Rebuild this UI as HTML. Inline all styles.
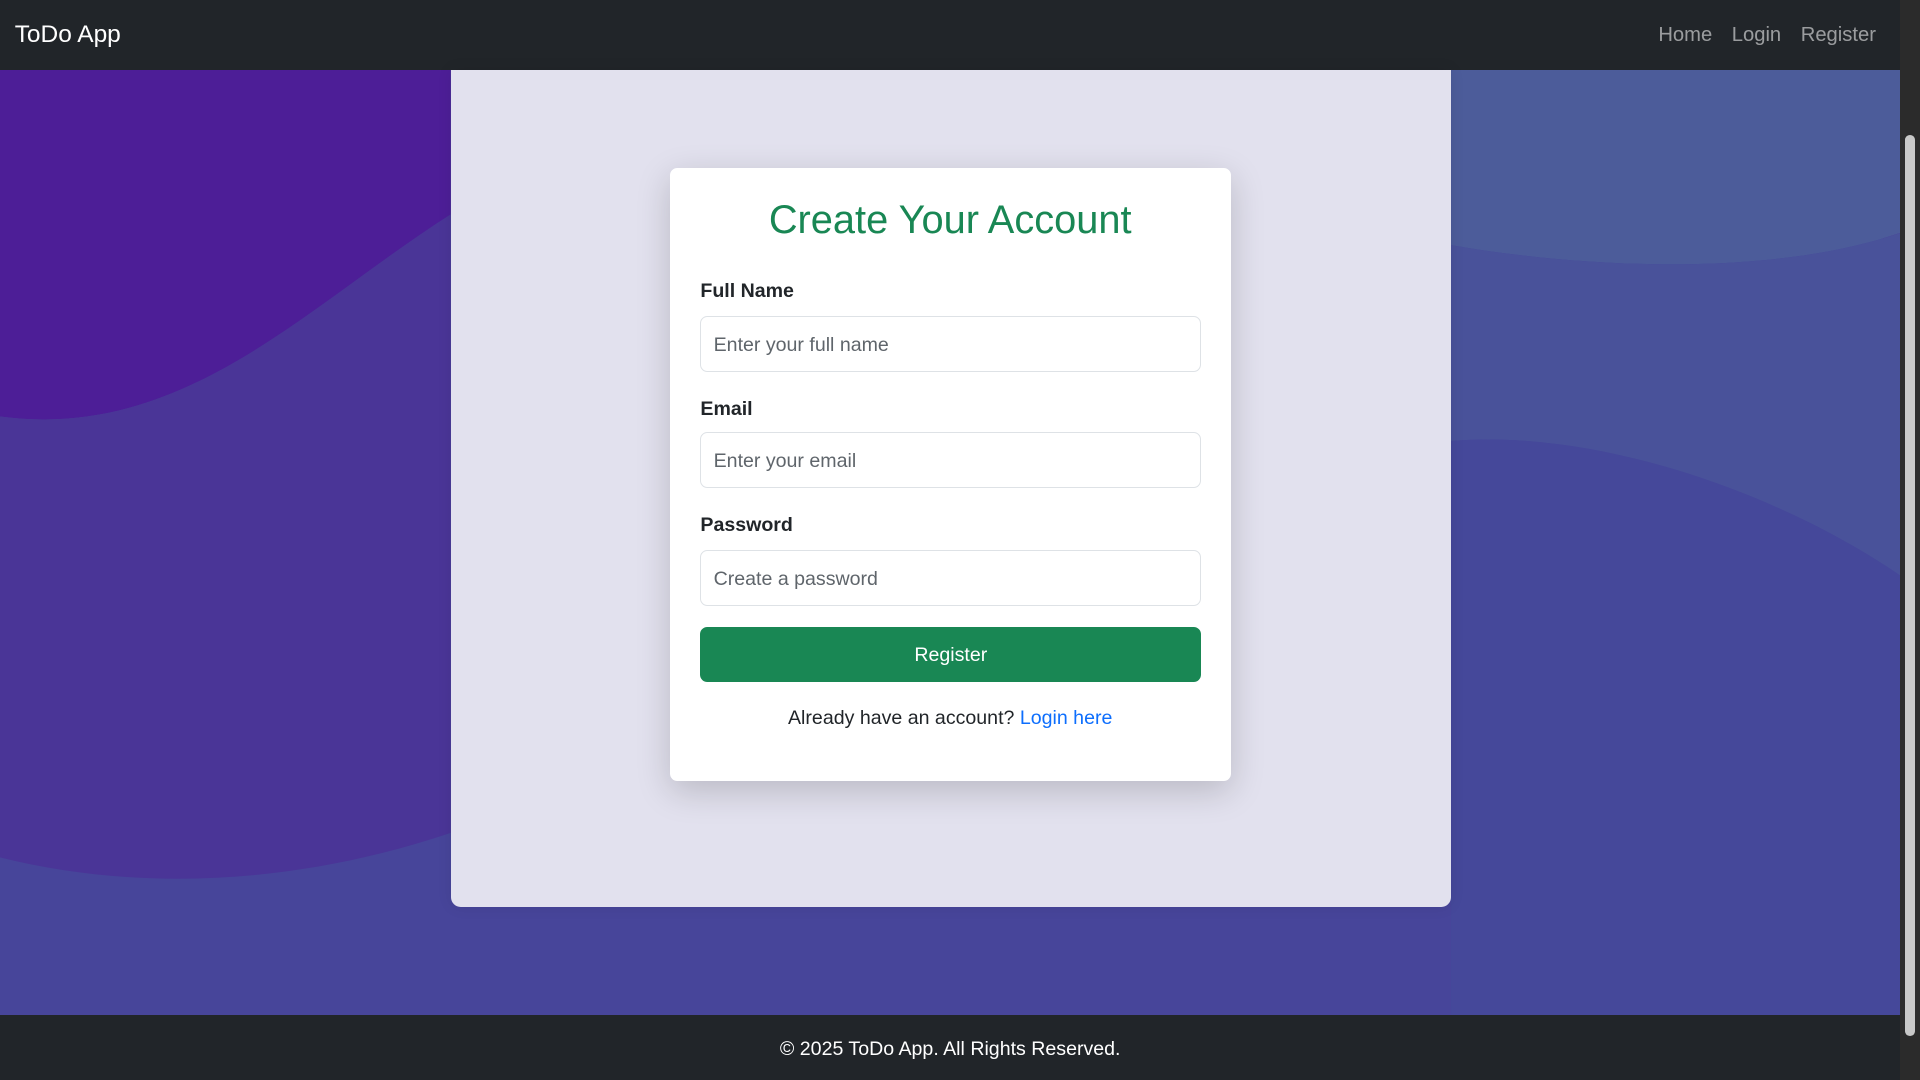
<!DOCTYPE html>
<html><head><meta charset="utf-8"><style>
html{zoom:1.22449;overflow:hidden}
body{margin:0;width:1568px;height:882px;font-family:"Liberation Sans",Arial,sans-serif;position:relative;overflow:hidden;background:#474595}
.nav{position:absolute;left:0;top:0;width:1552px;height:57px;background:#212529}
.brand{position:absolute;left:12px;top:17px;color:#fff;font-size:20px}
.links{position:absolute;right:20px;top:20px;font-size:16.5px;color:rgba(255,255,255,.55)}
.links span{margin-left:16px}
.bg{position:absolute;left:0;top:57px;width:1552px;height:772px}
.panel{position:absolute;left:368px;top:57px;width:817px;height:684px;background:#e2e1ee;border-radius:0 0 8px 8px;box-shadow:0 0 12px rgba(0,0,0,.08)}
.card{position:absolute;left:547px;top:137px;width:458px;height:501px;background:#fff;border-radius:6px;box-shadow:0 8px 28px rgba(0,0,0,.18)}
h2{margin:0;position:absolute;top:25px;width:100%;text-align:center;color:#198754;font-weight:400;font-size:32.5px}
label{position:absolute;left:25px;font-weight:700;font-size:16px;color:#212529}
.in{position:absolute;left:25px;width:407px;height:44px;border:1px solid #dee2e6;border-radius:6px;box-sizing:content-box}
.in span{position:absolute;left:10px;top:14px;font-size:16px;color:#5f656b}
.btn{position:absolute;left:25px;top:375px;width:409px;height:45px;background:#198754;border-radius:6px;color:#fff;font-size:16px;text-align:center;line-height:46px}
.alt{position:absolute;top:440px;width:100%;text-align:center;font-size:16px;color:#212529}
.alt a{color:#0d6efd;text-decoration:none}
.foot{position:absolute;left:0;top:829px;width:1552px;height:53px;background:#212529;color:#fff;text-align:center;font-size:16px;line-height:57px}
.sb{position:absolute;left:1552px;top:0;width:16px;height:882px;background:#2b2b2b}
.thumb{position:absolute;left:4px;top:110px;width:8px;height:736px;background:#c8c8c8;border-radius:4px}
</style></head><body>
<div class="nav"><div class="brand">ToDo App</div><div class="links"><span>Home</span><span>Login</span><span>Register</span></div></div>
<svg class="bg" viewBox="0 57 1552 772" preserveAspectRatio="none">
<rect x="0" y="57" width="1552" height="772" fill="#47459a"/>
<path d="M0 57H1552V200C1450 160 1300 150 1185 180V57H368V175C250 250 150 360 0 340Z" fill="#4d1e97"/>
<path d="M1185 57H1552V190C1450 225 1300 220 1185 200Z" fill="#4c5c9a"/>
<path d="M0 340C150 360 250 250 368 175V680C250 720 120 730 0 700Z" fill="#4a3597"/>
<path d="M1185 200C1300 220 1450 225 1552 190V470C1450 400 1300 350 1185 360Z" fill="#49529a"/>
<path d="M1185 360C1300 350 1450 400 1552 470V829H1185Z" fill="#45489a"/>
</svg>
<div class="panel"></div>
<div class="card">
<h2>Create Your Account</h2>
<label style="top:92px">Full Name</label>
<div class="in" style="top:121px"><span>Enter your full name</span></div>
<label style="top:188px">Email</label>
<div class="in" style="top:216px"><span>Enter your email</span></div>
<label style="top:283px">Password</label>
<div class="in" style="top:312px"><span>Create a password</span></div>
<div class="btn">Register</div>
<div class="alt">Already have an account? <a>Login here</a></div>
</div>
<div class="foot">© 2025 ToDo App. All Rights Reserved.</div>
<div class="sb"><div class="thumb"></div></div>
</body></html>
